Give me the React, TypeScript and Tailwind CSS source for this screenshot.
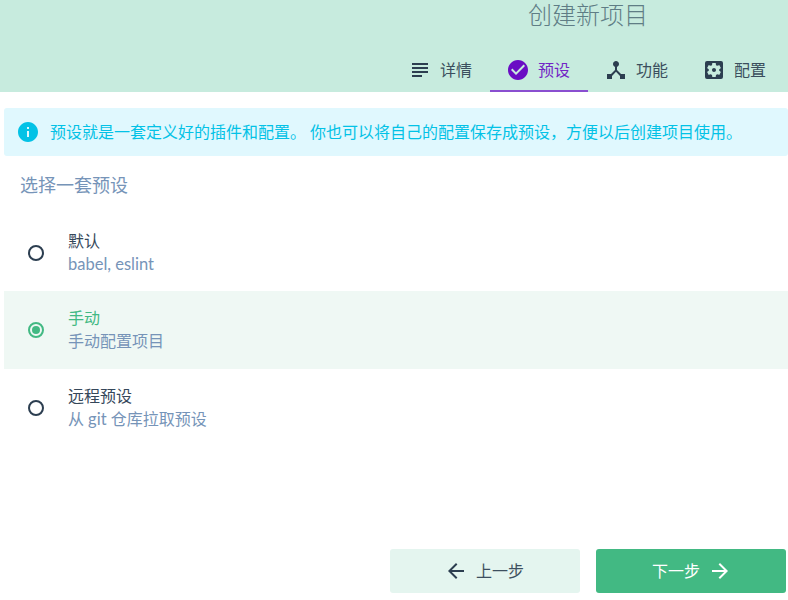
import type { ReactNode } from "react";
import {
  MdArrowBack,
  MdArrowForward,
  MdCheckCircle,
  MdDeviceHub,
  MdInfo,
  MdSettingsApplications,
  MdSubject,
} from "react-icons/md";

const FONT = "font-['Lato','Noto_Sans_CJK_SC',sans-serif]";

interface TabProps {
  icon: ReactNode;
  label: string;
  active?: boolean;
}

const Tab = ({ icon, label, active }: TabProps) => {
  return (
    <div
      className={`w-[98px] h-[47px] pt-[5px] pr-0.5 flex items-center justify-center gap-2 border-b-2 ${
        active
          ? "border-b-[#8a4fd0] text-[#6a0dc4]"
          : "border-b-transparent text-[#2c3e50]"
      }`}
    >
      <span className="text-[24px]">{icon}</span>
      <span className="text-[16px] leading-6 opacity-90">{label}</span>
    </div>
  );
};

interface PresetProps {
  title: string;
  desc: ReactNode;
  selected?: boolean;
  first?: boolean;
}

const Preset = ({ title, desc, selected, first }: PresetProps) => {
  return (
    <div
      className={`pl-6 flex items-center ${first ? "h-[77px] pt-px" : "h-[78px]"} ${
        selected ? "bg-[#eff8f4]" : ""
      }`}
    >
      <div
        className={`w-4 h-4 rounded-full border-2 flex items-center justify-center ${
          selected ? "border-[#42b983]" : "border-[#2c3e50]"
        }`}
      >
        {selected && <div className="w-2 h-2 rounded-full bg-[#42b983]"></div>}
      </div>
      <div className="ml-6 pb-0.5 flex flex-col">
        <div
          className={`text-[16px] leading-[23px] ${
            selected ? "text-[#42b983]" : "text-[#35475a]"
          }`}
        >
          {title}
        </div>
        <div className="text-[16px] leading-[23px] text-[#7694b8]">{desc}</div>
      </div>
    </div>
  );
};

export default function App() {
  return (
    <div className={`w-[788px] h-[600px] bg-white flex flex-col ${FONT}`}>
      <div className="h-[92px] bg-[#c7ebde] flex justify-end pr-1">
        <div className="w-[392px] flex flex-col">
          <div className="h-[45px] text-center text-[24px] leading-[30px] font-light text-[#5f7d85]">
            创建新项目
          </div>
          <div className="flex">
            <Tab icon={<MdSubject />} label="详情" />
            <Tab icon={<MdCheckCircle />} label="预设" active />
            <Tab icon={<MdDeviceHub />} label="功能" />
            <Tab icon={<MdSettingsApplications />} label="配置" />
          </div>
        </div>
      </div>

      <div className="flex-1 pl-1 pt-4 flex flex-col">
        <div className="h-12 flex items-center pl-3 gap-2.5 rounded-[3px] bg-[#e0f8fe] text-[#03c2e6]">
          <MdInfo className="text-[24px]" />
          <span className="text-[16px]">
            预设就是一套定义好的插件和配置。 你也可以将自己的配置保存成预设，方便以后创建项目使用。
          </span>
        </div>
        <div className="mt-4 pl-4 text-[18px] leading-[26px] text-[#7694b8]">
          选择一套预设
        </div>
        <div className="mt-4 flex flex-col">
          <Preset
            first
            title="默认"
            desc={<span className="text-[16.5px]">babel, eslint</span>}
          />
          <Preset title="手动" desc="手动配置项目" selected />
          <Preset
            title="远程预设"
            desc={
              <>
                从 <span className="text-[16.5px]">git</span> 仓库拉取预设
              </>
            }
          />
        </div>
        <div className="mt-auto mb-[7px] pr-0.5 flex justify-end gap-4">
          <div className="w-[190px] h-11 pr-0.5 rounded-[3px] bg-[#e4f5ef] text-[#2c3e50] flex items-center justify-center gap-2">
            <MdArrowBack className="text-[24px]" />
            <span className="text-[16px] pb-px opacity-90">上一步</span>
          </div>
          <div className="w-[190px] h-11 pl-0.5 rounded-[3px] bg-[#42b983] text-white flex items-center justify-center gap-2">
            <span className="text-[16px] pb-px">下一步</span>
            <MdArrowForward className="text-[24px]" />
          </div>
        </div>
      </div>
    </div>
  );
}
